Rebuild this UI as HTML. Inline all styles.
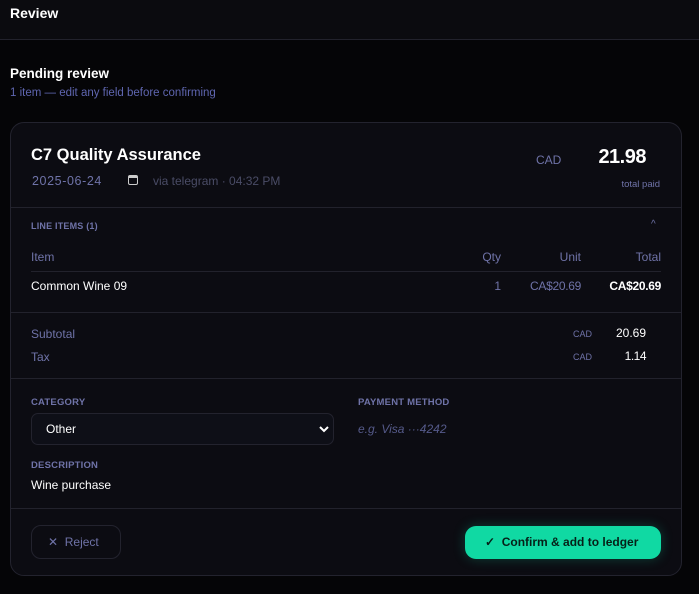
<!DOCTYPE html><html><head><style>
*{box-sizing:border-box;margin:0;padding:0}
body{width:699px;height:594px;background:#050507;font-family:"Liberation Sans",sans-serif;color:#fff;position:relative;overflow:hidden}
.a{position:absolute;white-space:nowrap}
.r{position:absolute;white-space:nowrap;text-align:right}
.top{position:absolute;left:0;top:0;width:699px;height:40px;background:#0b0b0f;border-bottom:1px solid #22222c}
.card{position:absolute;left:10px;top:122px;width:672px;height:454px;background:#0c0c12;border:1px solid #23232e;border-radius:14px}
.hr{position:absolute;left:0;width:670px;height:1px;background:#22222c}
.m{color:#6f73a8}
.lbl{font-size:9.5px;font-weight:bold;color:#6f73a8;letter-spacing:.2px}
</style></head><body>
<div class="top"><div class="a" style="left:10px;top:5px;font-size:14px;font-weight:bold">Review</div></div>
<div class="a" style="left:10px;top:66px;font-size:13.5px;font-weight:bold">Pending review</div>
<div class="a m" style="left:10px;top:87px;font-size:11.5px;color:#5f66b0">1 item — edit any field before confirming</div>
<div class="card">
<div class="a" style="left:20px;top:23px;font-size:16.5px;font-weight:bold">C7 Quality Assurance</div>
<div class="a m" style="left:21px;top:51px;font-size:12.5px;letter-spacing:.6px">2025-06-24</div>
<div class="a" style="left:117px;top:52px;width:10px;height:10px;border:1.5px solid #ccc;border-top-width:3px;border-radius:2px"></div>
<div class="a" style="left:142px;top:51px;font-size:12px;color:#4a4c66">via telegram · 04:32 PM</div>
<div class="a m" style="left:525px;top:30px;font-size:12px">CAD</div>
<div class="r" style="right:35px;top:23px;font-size:20px;font-weight:bold;letter-spacing:-.5px">21.98</div>
<div class="r m" style="right:21px;top:56px;font-size:9.5px">total paid</div>
<div class="hr" style="top:84px"></div>
<div class="a lbl" style="left:20px;top:98px;font-size:9px">LINE ITEMS (1)</div>
<div class="a m" style="left:640px;top:96px;font-size:10px">^</div>
<div class="a m" style="left:20px;top:127px;font-size:12px">Item</div>
<div class="r m" style="right:180px;top:127px;font-size:12px">Qty</div>
<div class="r m" style="right:100px;top:127px;font-size:12px">Unit</div>
<div class="r m" style="right:20px;top:127px;font-size:12px">Total</div>
<div class="a" style="left:20px;top:148px;width:630px;height:1px;background:#22222c"></div>
<div class="a" style="left:20px;top:156px;font-size:12px">Common Wine 09</div>
<div class="r m" style="right:180px;top:156px;font-size:12px">1</div>
<div class="r m" style="right:100px;top:156px;font-size:12px;letter-spacing:-.3px">CA$20.69</div>
<div class="r" style="right:20px;top:156px;font-size:12px;font-weight:bold;letter-spacing:-.3px">CA$20.69</div>
<div class="hr" style="top:189px"></div>
<div class="a m" style="left:20px;top:204px;font-size:12px">Subtotal</div>
<div class="r m" style="right:89px;top:206px;font-size:9px">CAD</div>
<div class="r" style="right:35px;top:203px;font-size:12px">20.69</div>
<div class="a m" style="left:20px;top:227px;font-size:12px">Tax</div>
<div class="r m" style="right:89px;top:229px;font-size:9px">CAD</div>
<div class="r" style="right:35px;top:226px;font-size:12px;letter-spacing:-.5px">1.14</div>
<div class="hr" style="top:255px"></div>
<div class="a lbl" style="left:20px;top:274px">CATEGORY</div>
<div class="a" style="left:20px;top:290px;width:303px;height:32px;border:1px solid #23232e;border-radius:7px;background:#0e0f17"></div>
<div class="a" style="left:35px;top:299px;font-size:12px">Other</div>
<svg class="a" style="left:308px;top:302px" width="10" height="8"><path d="M1 2l4 4 4-4" stroke="#fff" stroke-width="2" fill="none"/></svg>
<div class="a lbl" style="left:347px;top:274px">PAYMENT METHOD</div>
<div class="a" style="left:347px;top:299px;font-size:12px;font-style:italic;color:#555a8a">e.g. Visa ···4242</div>
<div class="a lbl" style="left:20px;top:337px">DESCRIPTION</div>
<div class="a" style="left:20px;top:355px;font-size:12px">Wine purchase</div>
<div class="hr" style="top:385px"></div>
<div class="a" style="left:20px;top:402px;width:90px;height:34px;border:1px solid #23232e;border-radius:10px"></div>
<div class="a m" style="left:37px;top:412px;font-size:12px">✕&nbsp;&nbsp;Reject</div>
<div class="a" style="left:454px;top:403px;width:196px;height:33px;background:#10d9a3;border-radius:11px;box-shadow:0 0 12px rgba(16,217,163,.25)"></div>
<div class="a" style="left:474px;top:412px;font-size:12px;font-weight:bold;color:#062018">✓&nbsp;&nbsp;Confirm &amp; add to ledger</div>
</div>
</body></html>
